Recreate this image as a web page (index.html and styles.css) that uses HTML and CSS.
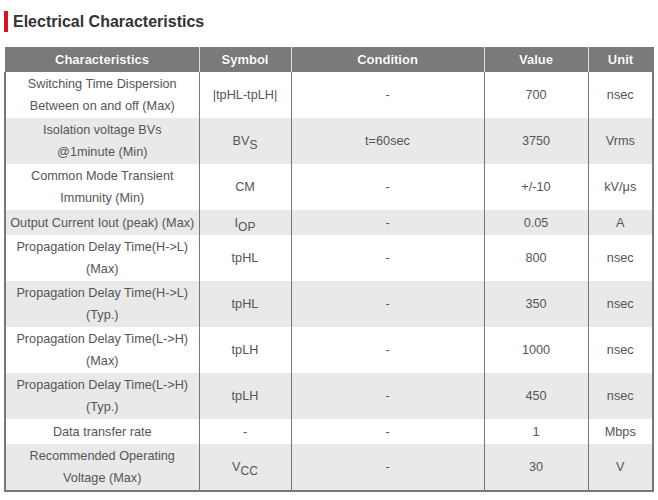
FILE: index.html
```html
<!DOCTYPE html>
<html>
<head>
<meta charset="utf-8">
<link rel="stylesheet" href="styles.css">
</head>
<body>
<h2 class="title">Electrical Characteristics</h2>
<table class="spec">
<colgroup>
<col class="c1"><col class="c2"><col class="c3"><col class="c4"><col class="c5">
</colgroup>
<thead>
<tr><th>Characteristics</th><th>Symbol</th><th>Condition</th><th>Value</th><th>Unit</th></tr>
</thead>
<tbody>
<tr><td>Switching Time Dispersion<br>Between on and off (Max)</td><td>|tpHL-tpLH|</td><td>-</td><td>700</td><td>nsec</td></tr>
<tr><td>Isolation voltage BVs<br>@1minute (Min)</td><td>BV<sub>S</sub></td><td>t=60sec</td><td>3750</td><td>Vrms</td></tr>
<tr><td>Common Mode Transient<br>Immunity (Min)</td><td>CM</td><td>-</td><td>+/-10</td><td>kV/μs</td></tr>
<tr class="one"><td>Output Current Iout (peak) (Max)</td><td>I<sub>OP</sub></td><td>-</td><td>0.05</td><td>A</td></tr>
<tr><td>Propagation Delay Time(H-&gt;L)<br>(Max)</td><td>tpHL</td><td>-</td><td>800</td><td>nsec</td></tr>
<tr><td>Propagation Delay Time(H-&gt;L)<br>(Typ.)</td><td>tpHL</td><td>-</td><td>350</td><td>nsec</td></tr>
<tr><td>Propagation Delay Time(L-&gt;H)<br>(Max)</td><td>tpLH</td><td>-</td><td>1000</td><td>nsec</td></tr>
<tr><td>Propagation Delay Time(L-&gt;H)<br>(Typ.)</td><td>tpLH</td><td>-</td><td>450</td><td>nsec</td></tr>
<tr class="one"><td>Data transfer rate</td><td>-</td><td>-</td><td>1</td><td>Mbps</td></tr>
<tr><td>Recommended Operating<br>Voltage (Max)</td><td>V<sub>CC</sub></td><td>-</td><td>30</td><td>V</td></tr>
</tbody>
</table>
</body>
</html>
```
FILE: styles.css
```css
html, body {
  margin: 0;
  padding: 0;
  background: #fff;
}
body {
  padding: 11px 4px 0 4px;
  font-family: "Liberation Sans", Arial, sans-serif;
}
.title {
  margin: 0 0 15px 0;
  border-left: 4px solid #d7141f;
  padding-left: 5px;
  font-size: 16px;
  line-height: 21px;
  font-weight: bold;
  color: #333;
}
.spec {
  border-collapse: collapse;
  width: 648px;
  table-layout: fixed;
  font-size: 12.7px;
  color: #555;
}
.c1 { width: 194px; }
.c2 { width: 92px; }
.c3 { width: 193px; }
.c4 { width: 104px; }
.c5 { width: 65px; }
.spec th {
  background: #7a7a7a;
  color: #fff;
  font-size: 13px;
  font-weight: bold;
  height: 25px;
  padding: 0 4px;
  line-height: 25px;
  text-shadow: 0 0 1px rgba(0,0,0,0.35);
  border-left: 1px solid #dcdcdc;
}
.spec th:first-child {
  border-left: 1px solid #7a7a7a;
}
.spec th:last-child {
  border-right: 1px solid #7a7a7a;
}
.spec td {
  text-align: center;
  line-height: 22px;
  padding: 1px 4px;
  height: 44px;
  border-left: 1px solid #777;
  border-right: 1px solid #777;
  white-space: nowrap;
}
.spec tr.one td {
  height: 23px;
  line-height: 22px;
}
.spec tbody tr:nth-child(even) td {
  background: #e9e9e9;
}
.spec tbody tr:last-child td {
  border-bottom: 2px solid #777;
}
.spec tbody td:first-child {
  border-left: 2px solid #777;
}
.spec tbody td:last-child {
  border-right: 2px solid #777;
}
.spec sub {
  font-size: 12px;
  vertical-align: -4px;
  line-height: 0;
}
```
